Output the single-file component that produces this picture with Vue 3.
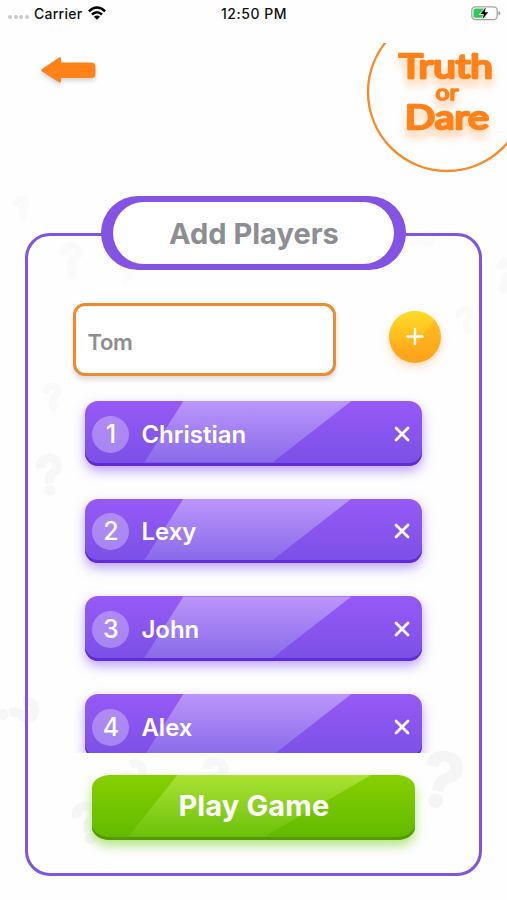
<script setup>
import { ref } from 'vue'

const name = ref('Tom')
const players = ref(['Christian', 'Lexy', 'John', 'Alex'])

// Faint question marks scattered behind the panel.
const marks = [
  { x: 22, y: 208, size: 28, turn: -12, tone: '#fafafa' },
  { x: 72, y: 260, size: 42, turn: -4, tone: '#fafafa' },
  { x: 127, y: 277, size: 20, turn: 20, tone: '#fcfcfc' },
  { x: 422, y: 240, size: 30, turn: 70, tone: '#fbfbfb' },
  { x: 507, y: 276, size: 44, turn: 8, tone: '#f9f9f9' },
  { x: 466, y: 320, size: 32, turn: -14, tone: '#fafafa' },
  { x: 53, y: 397, size: 34, turn: -6, tone: '#f9f9f9' },
  { x: 50, y: 475, size: 52, turn: -5, tone: '#f7f7f7' },
  { x: 18, y: 712, size: 52, turn: 76, tone: '#f6f6f6' },
  { x: 442, y: 780, size: 74, turn: 13, tone: '#f5f5f5' },
  { x: 128, y: 775, size: 48, turn: 62, tone: '#f7f7f7' },
  { x: 213, y: 778, size: 52, turn: 14, tone: '#f7f7f7' },
  { x: 88, y: 823, size: 54, turn: -14, tone: '#f6f6f6' }
]

function addPlayer() {
  if (name.value.trim()) players.value.push(name.value.trim())
}
function removePlayer(i) {
  players.value.splice(i, 1)
}
</script>

<template>
  <div class="screen">
    <svg class="backdrop" viewBox="0 0 507 900" aria-hidden="true">
      <text
        v-for="(m, i) in marks"
        :key="i"
        class="mark"
        :font-size="m.size"
        :fill="m.tone"
        :stroke="m.tone"
        :transform="`translate(${m.x} ${m.y}) rotate(${m.turn})`"
        text-anchor="middle"
        dy="0.36em"
      >?</text>
    </svg>

    <div class="status">
      <div class="carrier">
        <span class="dots"><i></i><i></i><i></i><i></i></span>
        <span class="carrier-name">Carrier</span>
        <svg class="wifi" viewBox="0 0 18 14">
          <g fill="none" stroke="#000" stroke-width="2.5">
            <path d="M0.9 5.3 Q9 -2.3 17.1 5.3" />
            <path d="M4 8.5 Q9 4 14 8.5" />
          </g>
          <path d="M9 13.8 L5.9 10.7 Q9 8.3 12.1 10.7 Z" />
        </svg>
      </div>
      <div class="time">12:50 PM</div>
      <svg class="battery" viewBox="0 0 30 15">
        <rect x="0.8" y="0.8" width="25.4" height="12.8" rx="3.6" fill="#fff" stroke="#a3a3a3" stroke-width="1.3" />
        <path d="M4 2.6 H14.5 V11.8 H4 Q2.5 11.8 2.5 10.3 V4.1 Q2.5 2.6 4 2.6 Z" fill="#35c759" />
        <path d="M27.4 5 Q29.4 5.3 29.4 7.2 Q29.4 9 27.4 9.4 Z" fill="#a3a3a3" />
        <path d="M14.8 1.6 L9.3 8 H12.8 L11.6 12.9 L17.2 6.3 H13.7 Z" fill="#000" stroke="#fff" stroke-width="1.4" paint-order="stroke" />
      </svg>
    </div>

    <header class="header">
      <button class="back" aria-label="Back">
        <svg viewBox="0 0 56 28">
          <path
            d="M2 13 L19 1.4 Q21 0.4 21 2.6 V6.5 H51 Q55.5 6.5 55.5 11 V17.5 Q55.5 22 51 22 H21 V25 Q21 27.4 19 26.2 L2 15.4 Q0.4 14.2 2 13 Z"
            fill="#ff8118"
          />
        </svg>
      </button>
      <svg class="logo" viewBox="0 0 141 131">
        <circle cx="81" cy="49" r="79" fill="none" stroke="#f98a25" stroke-width="2.3" />
        <g class="logo-words">
          <text x="33" y="34.8" font-size="32.5" textLength="94" lengthAdjust="spacingAndGlyphs" stroke-width="2.5">Truth</text>
          <text x="69.5" y="57" font-size="21" textLength="23" lengthAdjust="spacingAndGlyphs" stroke-width="1.7">or</text>
          <text x="39" y="86.3" font-size="32" textLength="84" lengthAdjust="spacingAndGlyphs" stroke-width="2.5">Dare</text>
        </g>
      </svg>
    </header>

    <main class="panel">
      <div class="title-ring"><h1 class="title">Add Players</h1></div>

      <div class="entry">
        <input v-model="name" class="field" aria-label="Player name" />
        <button class="add" aria-label="Add" @click="addPlayer">
          <svg viewBox="0 0 52 52">
            <defs>
              <linearGradient id="shine" x1="0" y1="0" x2="0" y2="1">
                <stop offset="0" stop-color="#fff030" stop-opacity="0.5" />
                <stop offset="0.75" stop-color="#ffea30" stop-opacity="0" />
              </linearGradient>
            </defs>
            <path fill="url(#shine)" d="M0 0 H52 L46 8 L18 45 L0 52 Z" />
            <path class="add-plus" d="M26 18 V33 M18.5 25.5 H33.5" />
          </svg>
        </button>
      </div>

      <div class="list">
        <div v-for="(p, i) in players" :key="i" class="player">
          <span class="number">{{ i + 1 }}</span>
          <span class="name">{{ p }}</span>
          <button class="remove" aria-label="Remove" @click="removePlayer(i)">
            <svg viewBox="0 0 16 16"><path d="M2 2 L14 14 M14 2 L2 14" /></svg>
          </button>
        </div>
      </div>

      <button class="play"><span>Play Game</span></button>
    </main>
  </div>
</template>

<style>
body {
  background: #fff;
}
</style>

<style scoped>
* {
  box-sizing: border-box;
}
button {
  border: 0;
  padding: 0;
  background: none;
  font: inherit;
}
.screen {
  position: relative;
  width: 507px;
  height: 900px;
  overflow: hidden;
  background: #fefefe;
  font-family: Inter, 'Liberation Sans', sans-serif;
  display: flex;
  flex-direction: column;
}
.backdrop {
  position: absolute;
  inset: 0;
  width: 507px;
  height: 900px;
}
.mark {
  font-family: Inter, sans-serif;
  font-weight: 600;
  stroke-width: 3;
  stroke-linejoin: round;
}
.status {
  position: relative;
  height: 43px;
  padding: 0 7px 17px 8px;
  display: grid;
  grid-template-columns: 1fr auto 1fr;
  align-items: center;
  color: #111;
  font-size: 14px;
  font-weight: 500;
}
.carrier {
  display: flex;
  align-items: center;
}
.dots {
  display: flex;
  gap: 1.6px;
  width: 26px;
  padding-top: 8px;
}
.dots i {
  width: 4px;
  height: 4px;
  border-radius: 50%;
  background: #c9c9c9;
}
.carrier-name {
  width: 54px;
  letter-spacing: 0.25px;
}
.time {
  letter-spacing: 0.5px;
}
.wifi {
  width: 18px;
  height: 14px;
}
.battery {
  width: 30px;
  height: 15px;
  justify-self: end;
  margin-right: -1px;
}
.header {
  position: relative;
  height: 153px;
  display: flex;
  justify-content: space-between;
  align-items: flex-start;
  padding-left: 40px;
}
.back {
  margin-top: 13px;
  width: 56px;
  height: 28px;
}
.back svg {
  display: block;
  width: 56px;
  height: 28px;
  overflow: visible;
  filter: drop-shadow(0 3px 2px rgba(0, 0, 0, 0.16));
}
.logo {
  width: 141px;
  height: 131px;
}
.logo-words {
  font-family: Lato, 'Open Sans', sans-serif;
  font-weight: 400;
  fill: #ff8118;
  stroke: #ff8118;
  stroke-linejoin: round;
  filter: drop-shadow(0 7px 4px rgba(255, 129, 24, 0.38));
}
.panel {
  position: relative;
  width: 457px;
  height: 643px;
  margin: 36.5px 0 0 25.4px;
  border: 3.5px solid #8056e0;
  border-radius: 25px;
  display: flex;
  flex-direction: column;
  align-items: center;
}
.title-ring {
  flex: none;
  width: 305px;
  height: 73.5px;
  margin-top: -39.5px;
  padding: 5.5px 12px;
  border-radius: 37px;
  background: #8453e4;
}
.title {
  margin: 0;
  height: 62.5px;
  border-radius: 31.5px;
  background: #fff;
  color: #8d8e91;
  font-size: 29px;
  font-weight: 700;
  line-height: 63px;
  text-align: center;
}
.entry {
  align-self: stretch;
  display: flex;
  justify-content: space-between;
  align-items: center;
  margin-top: 33px;
  padding: 0 38px 0 45px;
}
.field {
  width: 263px;
  height: 73px;
  padding: 5px 0 0 11px;
  border: 3px solid #ef8a30;
  border-radius: 12px;
  background: #fff;
  box-shadow: 0 4px 5px rgba(0, 0, 0, 0.13);
  color: #8d8e91;
  font-family: inherit;
  font-size: 22px;
  font-weight: 600;
  letter-spacing: -0.3px;
  outline: none;
}
.add {
  width: 52px;
  height: 52px;
  margin-top: -4px;
  border-radius: 50%;
  background: linear-gradient(#ffc41c, #fea01c);
  box-shadow: 0 4px 9px rgba(255, 140, 40, 0.3);
}
.add svg {
  display: block;
  width: 52px;
  height: 52px;
  border-radius: 50%;
}
.add-plus {
  stroke: #fff;
  stroke-width: 2.4;
  stroke-linecap: round;
}
.list {
  flex: none;
  width: 373px;
  height: 377.5px;
  overflow: hidden;
  padding: 25.5px 18px 0;
  display: flex;
  flex-direction: column;
  gap: 33.2px;
}
.player {
  position: relative;
  flex: none;
  height: 64.5px;
  padding: 0 12px 0 7px;
  border-radius: 13px;
  display: flex;
  align-items: center;
  background: linear-gradient(#9759f6, #7a50e7);
  box-shadow: inset 0 -3px 0 #622bd9, 0 5px 12px rgba(124, 70, 255, 0.5);
  color: #fff;
}
.player::before {
  content: '';
  position: absolute;
  inset: 0 0 3px;
  background: linear-gradient(#bb96fb, #896ae9);
  clip-path: polygon(98px 0, 266px 0, 187px 100%, 59px 100%);
}
.number {
  position: relative;
  width: 37px;
  height: 37px;
  margin-top: 2px;
  border-radius: 50%;
  background: rgba(255, 255, 255, 0.3);
  font-size: 25px;
  font-weight: 500;
  line-height: 37px;
  text-align: center;
}
.name {
  position: relative;
  flex: 1;
  padding: 2px 0 0 12px;
  font-size: 24px;
  font-weight: 600;
}
.remove {
  position: relative;
  width: 16px;
  height: 16px;
  margin-top: 1px;
}
.remove svg {
  display: block;
  width: 16px;
  height: 16px;
  stroke: #fff;
  stroke-width: 2.8;
  stroke-linecap: round;
}
.play {
  position: relative;
  flex: none;
  width: 323px;
  height: 64.5px;
  margin-top: 22px;
  padding-bottom: 3px;
  border-radius: 18px / 13px;
  background: linear-gradient(#86d000, #60b900);
  box-shadow: inset 0 -3px 0 #559b00, 0 6px 11px rgba(110, 205, 20, 0.5);
  color: #fff;
  font-size: 29px;
  font-weight: 700;
  letter-spacing: 0.15px;
}
.play::before {
  content: '';
  position: absolute;
  inset: 0 0 3px;
  background: linear-gradient(#aae232, #6cc10b);
  clip-path: polygon(85px 0, 279px 0, 172px 100%, 36px 100%);
}
.play span {
  position: relative;
}
</style>
